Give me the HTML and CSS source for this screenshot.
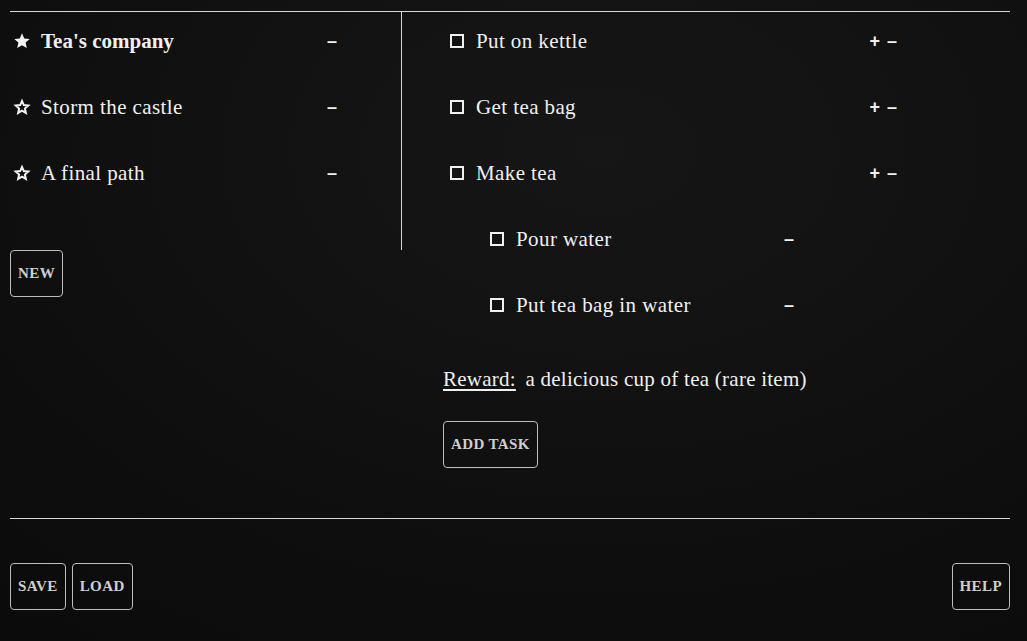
FILE: index.html
```html
<!DOCTYPE html>
<html>
<head>
<meta charset="utf-8">
<link rel="stylesheet" href="styles.css">
</head>
<body>
<div class="app">
  <div class="main">
    <div class="left">
      <div class="quest-panel">
        <div class="quest selected">
          <svg class="star" viewBox="0 0 20 20"><path d="M10 1.5l2.5 5.6 6.1.6-4.6 4.1 1.3 6-5.3-3.1-5.3 3.1 1.3-6-4.6-4.1 6.1-.6z" fill="#f2f2f2"/></svg>
          <span class="qname">Tea's company</span>
          <span class="ctrl">–</span>
        </div>
        <div class="quest">
          <svg class="star" viewBox="0 0 20 20"><path d="M10 3.2l2 4.6 5 .5-3.8 3.4 1.1 4.9-4.3-2.5-4.3 2.5 1.1-4.9-3.8-3.4 5-.5z" fill="none" stroke="#f2f2f2" stroke-width="2.2" stroke-linejoin="miter"/></svg>
          <span class="qname">Storm the castle</span>
          <span class="ctrl">–</span>
        </div>
        <div class="quest">
          <svg class="star" viewBox="0 0 20 20"><path d="M10 3.2l2 4.6 5 .5-3.8 3.4 1.1 4.9-4.3-2.5-4.3 2.5 1.1-4.9-3.8-3.4 5-.5z" fill="none" stroke="#f2f2f2" stroke-width="2.2" stroke-linejoin="miter"/></svg>
          <span class="qname">A final path</span>
          <span class="ctrl">–</span>
        </div>
      </div>
      <button class="btn">NEW</button>
    </div>
    <div class="right">
      <div class="task">
        <span class="box"></span><span class="tname">Put on kettle</span><span class="ctrl">+ –</span>
      </div>
      <div class="task">
        <span class="box"></span><span class="tname">Get tea bag</span><span class="ctrl">+ –</span>
      </div>
      <div class="task">
        <span class="box"></span><span class="tname">Make tea</span><span class="ctrl">+ –</span>
      </div>
      <div class="task sub">
        <span class="box"></span><span class="tname">Pour water</span><span class="ctrl">–</span>
      </div>
      <div class="task sub">
        <span class="box"></span><span class="tname">Put tea bag in water</span><span class="ctrl">–</span>
      </div>
      <div class="reward"><span class="rlabel">Reward:</span> <span>a delicious cup of tea (rare item)</span></div>
      <button class="btn">ADD TASK</button>
    </div>
  </div>
  <div class="footer">
    <div class="group">
      <button class="btn">SAVE</button>
      <button class="btn">LOAD</button>
    </div>
    <button class="btn">HELP</button>
  </div>
</div>
</body>
</html>
```

FILE: styles.css
```css
html, body {
  margin: 0;
  padding: 0;
  height: 100%;
}
body {
  background: radial-gradient(ellipse 900px 600px at 600px 150px, #161616 0%, #111 45%, #0b0b0b 100%);
  color: #f0f0f0;
  font-family: "Liberation Serif", "DejaVu Serif", serif;
  font-size: 21px;
  letter-spacing: 0.4px;
}
.app {
  padding: 11px 17px 0 10px;
}
.main {
  border-top: 1px solid #d8d8d8;
  display: flex;
  height: 506px;
}
.left {
  width: 392px;
  flex: none;
}
.quest-panel {
  border-right: 1px solid #d8d8d8;
  height: 238px;
  box-sizing: border-box;
}
.quest {
  display: flex;
  align-items: center;
  height: 66px;
  padding: 0 0 8px 3px;
  box-sizing: border-box;
  width: 328px;
}
.quest .star {
  width: 18px;
  height: 18px;
  margin-right: 10px;
  flex: none;
}
.quest .qname {
  flex: 1;
}
.quest.selected .qname {
  font-weight: bold;
  letter-spacing: 0;
}
.ctrl {
  font-weight: bold;
  font-family: "Liberation Sans", sans-serif;
  font-size: 18px;
  letter-spacing: 1px;
  white-space: nowrap;
}
.right {
  flex: 1;
  padding-left: 41px;
}
.task {
  display: flex;
  align-items: center;
  height: 66px;
  padding: 0 0 8px 7px;
  box-sizing: border-box;
  width: 455px;
}
.task.sub {
  padding-left: 47px;
  width: 352px;
}
.box {
  width: 10px;
  height: 10px;
  border: 2.5px solid #f0f0f0;
  margin-right: 12px;
  flex: none;
}
.tname {
  flex: 1;
}
.reward {
  margin-top: 25px;
  line-height: 24px;
  letter-spacing: 0.25px;
}
.rlabel {
  text-decoration: underline;
  text-underline-offset: 3px;
  margin-right: 4px;
}
.btn {
  background: transparent;
  color: #cfcfcf;
  border: 1px solid #bdbdbd;
  border-radius: 4px;
  font-family: "Liberation Serif", "DejaVu Serif", serif;
  font-weight: bold;
  font-size: 15px;
  letter-spacing: 0.4px;
  height: 47px;
  padding: 0 7px;
  display: block;
}
.right .btn {
  margin-top: 30px;
}
.footer {
  border-top: 1px solid #d8d8d8;
  display: flex;
  justify-content: space-between;
  padding-top: 44px;
}
.group {
  display: flex;
  gap: 6px;
}
```
